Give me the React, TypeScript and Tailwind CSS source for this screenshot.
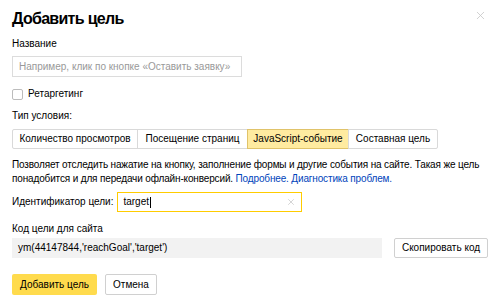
import { X } from 'lucide-react';

const conditionTypes = [
  { label: 'Количество просмотров', width: 'w-[126px]' },
  { label: 'Посещение страниц', width: 'w-[111px]' },
  { label: 'JavaScript-событие', width: 'w-[102px]' },
  { label: 'Составная цель', width: 'w-[90px]' },
];

export default function App() {
  return (
    <div className="relative h-[307px] w-[500px] bg-white px-3 text-[10px] leading-[14px] text-black" style={{ fontFamily: '"Liberation Sans", Arial, sans-serif' }}>
      <button className="absolute right-[13px] top-[9px] text-[#c8c8c8]">
        <X size={13} strokeWidth={1.5} />
      </button>
      <h1 className="pt-[7px] text-[16px] font-bold leading-[24px] tracking-[-0.7px]">Добавить цель</h1>

      <div className="mt-[6px]">Название</div>
      <div className="mt-[5px] flex h-[21px] w-[230px] items-center border border-[#dcdcdc] px-[6px] text-[#999]">
        Например, клик по кнопке «Оставить заявку»
      </div>

      <label className="mt-[10px] flex items-center gap-[5px]">
        <span className="h-[11px] w-[11px] rounded-[2px] border border-[#bcbcbc] bg-white" />
        Ретаргетинг
      </label>

      <div className="mt-[8px]">Тип условия:</div>
      <div className="mt-[6px] flex h-[20px]">
        {conditionTypes.map((t, i) => (
          <div
            key={t.label}
            className={
              i === 2
                ? 'flex items-center justify-center border border-[#e0c36a] bg-[#ffeba0] -ml-px ' + t.width
                : 'flex items-center justify-center border border-[#d9d9d9] bg-white ' + t.width + (i === 0 ? ' rounded-l-[2px]' : ' -ml-px') + (i === 3 ? ' rounded-r-[2px]' : '')
            }
          >
            {t.label}
          </div>
        ))}
      </div>

      <p className="mt-[9px] whitespace-nowrap tracking-[-0.15px]">
        Позволяет отследить нажатие на кнопку, заполнение формы и другие события на сайте. Такая же цель
        <br />
        понадобится и для передачи офлайн-конверсий. <span className="text-[#0044bb]">Подробнее.</span>{' '}
        <span className="text-[#0044bb]">Диагностика проблем.</span>
      </p>

      <div className="mt-[6px] flex items-center gap-[4px]">
        <span>Идентификатор цели:</span>
        <div className="flex h-[20px] w-[185px] items-center justify-between border border-[#ffcc00] pl-[5px] pr-[5px]">
          <span>
            target<span className="ml-px inline-block h-[11px] w-px bg-black align-middle" />
          </span>
          <X size={10} strokeWidth={1.5} className="text-[#bbb]" />
        </div>
      </div>

      <div className="mt-[10px]">Код цели для сайта</div>
      <div className="mt-[2px] flex items-center gap-[12px]">
        <div className="flex h-[20px] w-[370px] shrink-0 items-center bg-[#f2f2f2] px-[6px]">ym(44147844,'reachGoal','target')</div>
        <button className="flex h-[20px] w-[94px] shrink-0 items-center justify-center whitespace-nowrap rounded-[2px] border border-[#d0d0d0] bg-white">
          Скопировать код
        </button>
      </div>

      <div className="mt-[16px] flex gap-[8px]">
        <button className="flex h-[21px] w-[85px] items-center justify-center rounded-[2px] bg-[#ffdb4d]">Добавить цель</button>
        <button className="flex h-[21px] w-[52px] items-center justify-center rounded-[2px] border border-[#d0d0d0] bg-white">Отмена</button>
      </div>
    </div>
  );
}
